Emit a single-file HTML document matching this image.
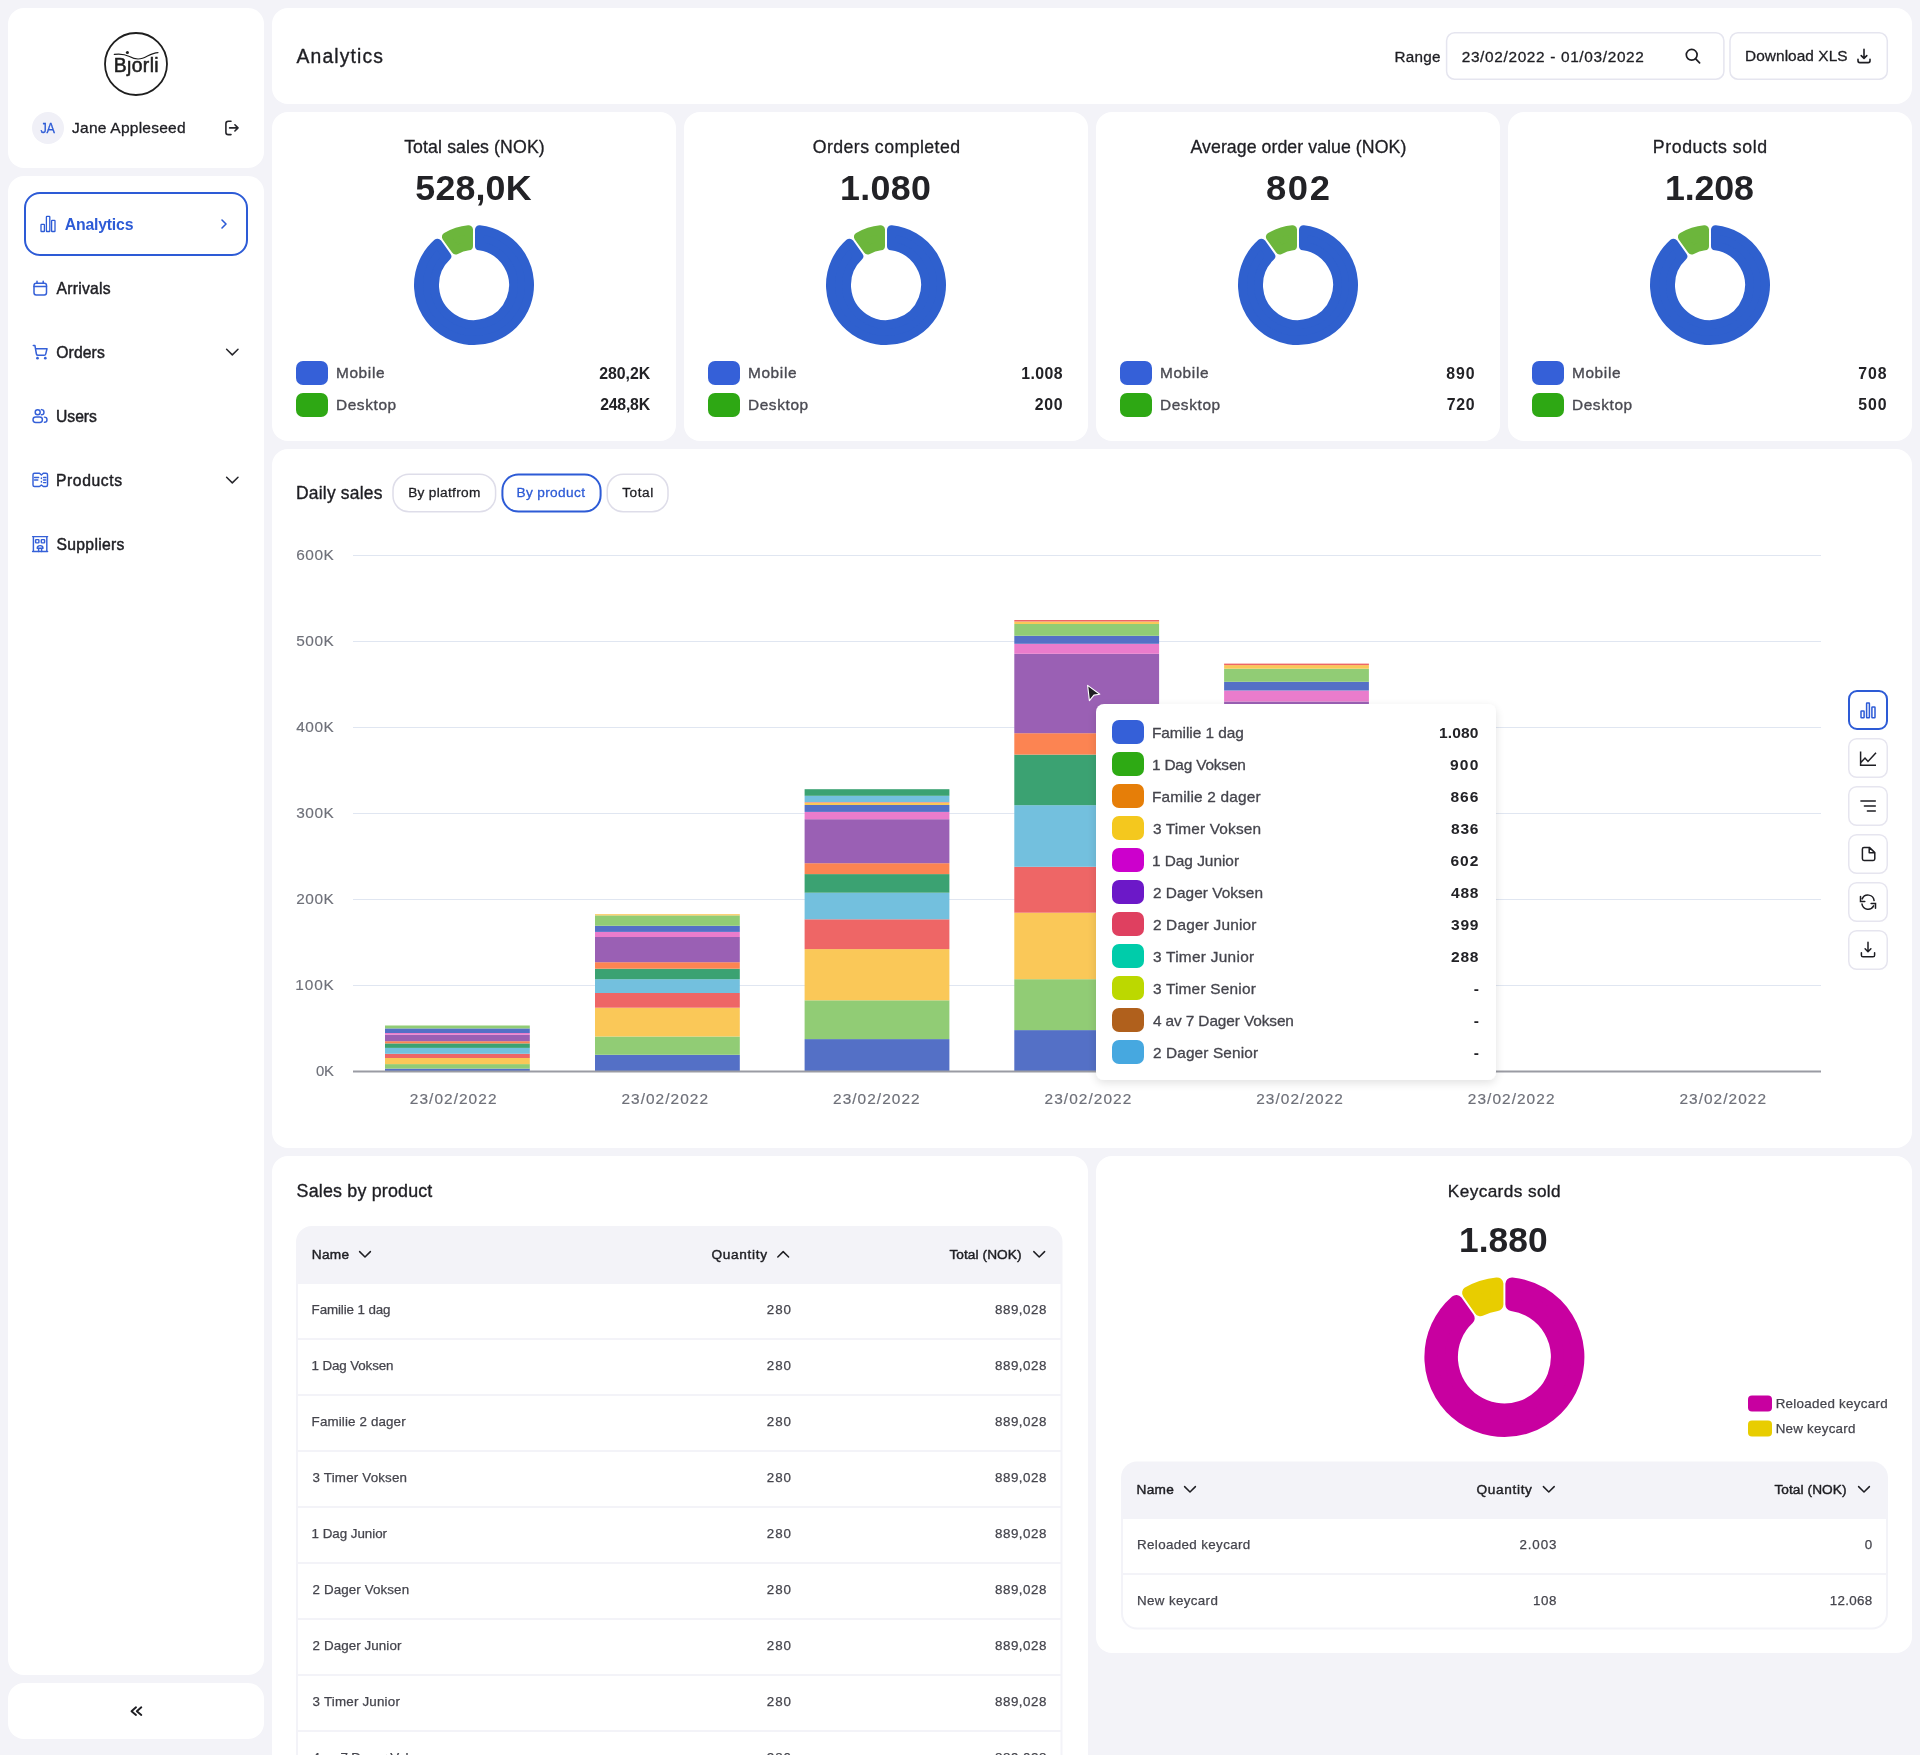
<!DOCTYPE html>
<html lang="en"><head><meta charset="utf-8"><title>Analytics</title>
<style>
*{box-sizing:border-box;margin:0;padding:0}
html,body{width:1920px;height:1755px;overflow:hidden;background:#f3f3f8;font-family:"Liberation Sans",sans-serif}
svg{position:absolute;left:0;top:0;display:block;will-change:transform}
svg text{font-family:"Liberation Sans",sans-serif;white-space:pre}
</style></head><body>
<svg width="1920" height="1755" viewBox="0 0 1920 1755">
<defs>
<filter id="tipsh" x="-10%" y="-10%" width="120%" height="125%"><feGaussianBlur in="SourceAlpha" stdDeviation="5"/><feOffset dx="0" dy="3"/><feComponentTransfer><feFuncA type="linear" slope="0.12"/></feComponentTransfer><feMerge><feMergeNode/><feMergeNode in="SourceGraphic"/></feMerge></filter>
</defs>
<rect x="8" y="8" width="256" height="160" rx="16" fill="#ffffff"/>
<rect x="8" y="176" width="256" height="1499" rx="16" fill="#ffffff"/>
<rect x="8" y="1683" width="256" height="56" rx="16" fill="#ffffff"/>
<rect x="272" y="8" width="1640" height="96" rx="16" fill="#ffffff"/>
<rect x="272" y="112" width="404" height="329" rx="16" fill="#ffffff"/>
<rect x="684" y="112" width="404" height="329" rx="16" fill="#ffffff"/>
<rect x="1096" y="112" width="404" height="329" rx="16" fill="#ffffff"/>
<rect x="1508" y="112" width="404" height="329" rx="16" fill="#ffffff"/>
<rect x="272" y="449" width="1640" height="699" rx="16" fill="#ffffff"/>
<rect x="272" y="1156" width="816" height="700" rx="16" fill="#ffffff"/>
<rect x="1096" y="1156" width="816" height="497" rx="16" fill="#ffffff"/>
<circle cx="136" cy="64" r="31" fill="none" stroke="#1e1e1e" stroke-width="1.8"/>
<text x="113.8" y="71.9" font-size="19.33" font-weight="400" fill="#1e1e1e" letter-spacing="0.37" stroke="#1e1e1e" stroke-width="0.55" stroke-linejoin="round">Bjorli</text>
<rect x="126.5" y="54" width="5" height="5.6" fill="#fff"/>
<path d="M114.3 54.4 C120 53.6 124.5 54 129.5 56.6 C133.5 58.8 138 59.8 142.5 58.3 C147.5 56.6 151.5 52.8 158 52.6" fill="none" stroke="#1e1e1e" stroke-width="1.15" stroke-linecap="round"/>
<circle cx="127.4" cy="52.5" r="1.55" fill="#1e1e1e"/>
<circle cx="48" cy="128" r="16" fill="#f0f0f7"/>
<text transform="translate(40.6 132.8) scale(0.8783 1)" font-size="14.39" font-weight="400" fill="#2d5bd6" letter-spacing="-0.45" stroke="#2d5bd6" stroke-width="0.3" stroke-linejoin="round">JA</text>
<text x="72" y="133.3" font-size="15.55" font-weight="400" fill="#1e1e23" letter-spacing="0.23" stroke="#1e1e23" stroke-width="0.3" stroke-linejoin="round">Jane Appleseed</text>
<path d="M231 121.3 H228.3 A2.4 2.4 0 0 0 225.9 123.7 V132.2 A2.4 2.4 0 0 0 228.3 134.6 H231" fill="none" stroke="#26262b" stroke-width="1.6" stroke-linecap="round"/>
<path d="M229.6 127.9 H237.6 M234.9 124.8 L238 127.9 L234.9 131" fill="none" stroke="#26262b" stroke-width="1.6" stroke-linecap="round" stroke-linejoin="round"/>
<rect x="25" y="193" width="222" height="62" rx="15" fill="none" stroke="#2d5bd6" stroke-width="2"/>
<g fill="none" stroke="#2d5bd6" stroke-width="1.3"><rect x="41" y="224.3" width="3.4" height="7.2" rx="0.6"/><rect x="46.4" y="216.4" width="3.4" height="15.1" rx="0.6"/><rect x="51.6" y="220.3" width="3.4" height="11.2" rx="0.6"/></g>
<text x="64.7" y="229.5" font-size="15.84" font-weight="700" fill="#2d5bd6" letter-spacing="-0.2">Analytics</text>
<path d="M222 220 L226 224 L222 228" fill="none" stroke="#2d5bd6" stroke-width="1.6" stroke-linecap="round" stroke-linejoin="round"/>
<text x="56.6" y="293.5" font-size="15.7" font-weight="400" fill="#1e1e23" letter-spacing="0.24" stroke="#1e1e23" stroke-width="0.45" stroke-linejoin="round">Arrivals</text>
<text x="56.3" y="357.5" font-size="15.7" font-weight="400" fill="#1e1e23" letter-spacing="0.1" stroke="#1e1e23" stroke-width="0.45" stroke-linejoin="round">Orders</text>
<text x="56" y="421.5" font-size="15.7" font-weight="400" fill="#1e1e23" letter-spacing="-0.01" stroke="#1e1e23" stroke-width="0.45" stroke-linejoin="round">Users</text>
<text x="56" y="485.5" font-size="15.7" font-weight="400" fill="#1e1e23" letter-spacing="0.59" stroke="#1e1e23" stroke-width="0.45" stroke-linejoin="round">Products</text>
<text x="56.5" y="549.5" font-size="15.7" font-weight="400" fill="#1e1e23" letter-spacing="0.31" stroke="#1e1e23" stroke-width="0.45" stroke-linejoin="round">Suppliers</text>
<g fill="none" stroke="#3560d8" stroke-width="1.5" stroke-linecap="round"><rect x="34" y="283.3" width="12.5" height="11.6" rx="2.2"/><path d="M34 286.4 H46.5 M37 281.2 V283.3 M43.2 281.2 V283.3"/></g>
<g fill="none" stroke="#3560d8" stroke-width="1.5" stroke-linecap="round" stroke-linejoin="round"><path d="M33.3 345.4 H34.9 L36.4 354 A1.6 1.6 0 0 0 38 355.3 H44.2 A1.6 1.6 0 0 0 45.7 354.1 L47 348.8 H35.6"/></g><circle cx="37.5" cy="358.2" r="1.35" fill="#3560d8"/><circle cx="45.3" cy="358.2" r="1.35" fill="#3560d8"/>
<g fill="none" stroke="#3560d8" stroke-width="1.45" stroke-linecap="round"><circle cx="37.7" cy="412.2" r="2.5"/><path d="M41.4 409.6 A2.6 2.6 0 0 1 41.4 414.8"/><rect x="33" y="417" width="9.4" height="5.4" rx="2.7"/><path d="M44.4 417.1 A2.6 2.6 0 0 1 44.4 422.3"/></g>
<g fill="none" stroke="#3560d8" stroke-width="1.45" stroke-linecap="round" stroke-linejoin="round"><path d="M34.5 473.3 H39.5 L41.4 475 L43.3 473.3 H46 A1.5 1.5 0 0 1 47.5 474.8 V485 A1.5 1.5 0 0 1 46 486.5 H43.3 L41.4 485 L39.5 486.5 H34.5 A1.5 1.5 0 0 1 33 485 V474.8 A1.5 1.5 0 0 1 34.5 473.3 Z"/><path d="M34.6 477.4 H38.6 M34.6 480 H37.8 M43.5 477.4 H45.8 M43.5 480 H45.8 M43.5 482.6 H45.8 M41.4 478 V478.6 M41.4 481.5 V482.1"/></g>
<g fill="none" stroke="#3560d8" stroke-width="1.45" stroke-linecap="round" stroke-linejoin="round"><path d="M32.6 536.6 H47.6 M32.6 551.4 H47.6 M33.4 536.6 V551.4 M46.8 536.6 V551.4"/><rect x="35.6" y="539.6" width="3.3" height="3.3" rx="0.6"/><rect x="41.3" y="539.6" width="3.3" height="3.3" rx="0.6"/><path d="M38.6 551.4 V548.4 M41.6 551.4 V548.4 M37.2 548.2 A2.9 2.6 0 0 1 43 548.2 Z"/></g>
<path d="M226.6 349.2 L232.3 354.9 L238 349.2" transform="translate(0 0)" fill="none" stroke="#26262b" stroke-width="1.5" stroke-linecap="round" stroke-linejoin="round"/>
<path d="M226.6 349.2 L232.3 354.9 L238 349.2" transform="translate(0 128)" fill="none" stroke="#26262b" stroke-width="1.5" stroke-linecap="round" stroke-linejoin="round"/>
<path d="M136 1707.3 L131.5 1711.2 L136 1715 M141.3 1707.3 L136.8 1711.2 L141.3 1715" fill="none" stroke="#1e1e23" stroke-width="1.9" stroke-linecap="round" stroke-linejoin="round"/>
<text x="296.5" y="62.65" font-size="19.33" font-weight="400" fill="#1e1e23" letter-spacing="1.13" stroke="#1e1e23" stroke-width="0.35" stroke-linejoin="round">Analytics</text>
<text x="1394.6" y="61.5" font-size="15.26" font-weight="400" fill="#1e1e23" letter-spacing="0.21" stroke="#1e1e23" stroke-width="0.3" stroke-linejoin="round">Range</text>
<rect x="1446.6" y="32.8" width="277.3" height="46.4" rx="8" fill="#fff" stroke="#e5e5ef" stroke-width="1.5"/>
<text x="1461.7" y="61.5" font-size="15.41" font-weight="400" fill="#1e1e23" letter-spacing="0.65" stroke="#1e1e23" stroke-width="0.3" stroke-linejoin="round">23/02/2022 - 01/03/2022</text>
<g fill="none" stroke="#1e1e23" stroke-width="1.7" stroke-linecap="round"><circle cx="1691.7" cy="54.8" r="5.4"/><path d="M1695.7 58.9 L1699.6 62.8"/></g>
<rect x="1730" y="32.8" width="157.3" height="46.4" rx="8" fill="#fff" stroke="#e5e5ef" stroke-width="1.5"/>
<text x="1745" y="61.3" font-size="15.41" font-weight="400" fill="#1e1e23" letter-spacing="0.06" stroke="#1e1e23" stroke-width="0.3" stroke-linejoin="round">Download XLS</text>
<g fill="none" stroke="#1e1e23" stroke-width="1.6" stroke-linecap="round" stroke-linejoin="round"><path d="M1864 49.3 V58.2 M1861.2 55.6 L1864 58.4 L1866.8 55.6 M1858 59.2 V60.8 A1.8 1.8 0 0 0 1859.8 62.6 H1868.2 A1.8 1.8 0 0 0 1870 60.8 V59.2"/></g>
<text x="404.15" y="152.7" font-size="17.73" font-weight="400" fill="#1e1e23" letter-spacing="0.11" stroke="#1e1e23" stroke-width="0.3" stroke-linejoin="round">Total sales (NOK)</text>
<text x="415.35" y="200" font-size="35.76" font-weight="700" fill="#222226" letter-spacing="0.17">528,0K</text>
<path d="M479.49 229.77 A55.5 55.5 0 1 1 437.46 243.23 L446.82 256.34 A39.5 39.5 0 1 0 479.48 245.88 Z" fill="#2f60ce" stroke="#2f60ce" stroke-width="9" stroke-linejoin="round"/>
<path d="M446.4 236.85 A55.5 55.5 0 0 1 468.51 229.77 L468.52 245.88 A39.5 39.5 0 0 0 455.75 249.97 Z" fill="#6cb63c" stroke="#6cb63c" stroke-width="9" stroke-linejoin="round"/>
<rect x="296" y="361" width="32" height="24" rx="7" fill="#3560d8"/>
<rect x="296" y="393" width="32" height="24" rx="7" fill="#2ea814"/>
<text x="335.9" y="378.4" font-size="15.41" font-weight="400" fill="#4a4a52" letter-spacing="0.66" stroke="#4a4a52" stroke-width="0.35" stroke-linejoin="round">Mobile</text>
<text x="335.9" y="410.3" font-size="15.41" font-weight="400" fill="#4a4a52" letter-spacing="0.63" stroke="#4a4a52" stroke-width="0.35" stroke-linejoin="round">Desktop</text>
<text x="599.3" y="378.5" font-size="15.84" font-weight="700" fill="#222226" letter-spacing="-0.04">280,2K</text>
<text x="600.2" y="410.4" font-size="15.84" font-weight="700" fill="#222226" letter-spacing="-0.22">248,8K</text>
<text x="812.7" y="152.7" font-size="17.73" font-weight="400" fill="#1e1e23" letter-spacing="0.44" stroke="#1e1e23" stroke-width="0.3" stroke-linejoin="round">Orders completed</text>
<text x="839.9" y="200" font-size="35.76" font-weight="700" fill="#222226" letter-spacing="0.41">1.080</text>
<path d="M891.49 229.77 A55.5 55.5 0 1 1 849.46 243.23 L858.82 256.34 A39.5 39.5 0 1 0 891.48 245.88 Z" fill="#2f60ce" stroke="#2f60ce" stroke-width="9" stroke-linejoin="round"/>
<path d="M858.4 236.85 A55.5 55.5 0 0 1 880.51 229.77 L880.52 245.88 A39.5 39.5 0 0 0 867.75 249.97 Z" fill="#6cb63c" stroke="#6cb63c" stroke-width="9" stroke-linejoin="round"/>
<rect x="708" y="361" width="32" height="24" rx="7" fill="#3560d8"/>
<rect x="708" y="393" width="32" height="24" rx="7" fill="#2ea814"/>
<text x="747.9" y="378.4" font-size="15.41" font-weight="400" fill="#4a4a52" letter-spacing="0.66" stroke="#4a4a52" stroke-width="0.35" stroke-linejoin="round">Mobile</text>
<text x="747.9" y="410.3" font-size="15.41" font-weight="400" fill="#4a4a52" letter-spacing="0.63" stroke="#4a4a52" stroke-width="0.35" stroke-linejoin="round">Desktop</text>
<text x="1021.2" y="378.5" font-size="15.84" font-weight="700" fill="#222226" letter-spacing="0.42">1.008</text>
<text x="1034.7" y="410.4" font-size="15.84" font-weight="700" fill="#222226" letter-spacing="0.7">200</text>
<text x="1190.5" y="152.7" font-size="17.73" font-weight="400" fill="#1e1e23" letter-spacing="0.06" stroke="#1e1e23" stroke-width="0.3" stroke-linejoin="round">Average order value (NOK)</text>
<text transform="translate(1265.98 200) scale(1.0170 1)" font-size="35.76" font-weight="700" fill="#222226" letter-spacing="1.6">802</text>
<path d="M1303.49 229.77 A55.5 55.5 0 1 1 1261.46 243.23 L1270.82 256.34 A39.5 39.5 0 1 0 1303.48 245.88 Z" fill="#2f60ce" stroke="#2f60ce" stroke-width="9" stroke-linejoin="round"/>
<path d="M1270.4 236.85 A55.5 55.5 0 0 1 1292.51 229.77 L1292.52 245.88 A39.5 39.5 0 0 0 1279.75 249.97 Z" fill="#6cb63c" stroke="#6cb63c" stroke-width="9" stroke-linejoin="round"/>
<rect x="1120" y="361" width="32" height="24" rx="7" fill="#3560d8"/>
<rect x="1120" y="393" width="32" height="24" rx="7" fill="#2ea814"/>
<text x="1159.9" y="378.4" font-size="15.41" font-weight="400" fill="#4a4a52" letter-spacing="0.66" stroke="#4a4a52" stroke-width="0.35" stroke-linejoin="round">Mobile</text>
<text x="1159.9" y="410.3" font-size="15.41" font-weight="400" fill="#4a4a52" letter-spacing="0.63" stroke="#4a4a52" stroke-width="0.35" stroke-linejoin="round">Desktop</text>
<text x="1446.2" y="378.5" font-size="15.84" font-weight="700" fill="#222226" letter-spacing="0.95">890</text>
<text x="1446.7" y="410.4" font-size="15.84" font-weight="700" fill="#222226" letter-spacing="0.7">720</text>
<text x="1652.85" y="152.7" font-size="17.73" font-weight="400" fill="#1e1e23" letter-spacing="0.57" stroke="#1e1e23" stroke-width="0.3" stroke-linejoin="round">Products sold</text>
<text x="1665" y="200" font-size="35.76" font-weight="700" fill="#222226" letter-spacing="-0.14">1.208</text>
<path d="M1715.49 229.77 A55.5 55.5 0 1 1 1673.46 243.23 L1682.82 256.34 A39.5 39.5 0 1 0 1715.48 245.88 Z" fill="#2f60ce" stroke="#2f60ce" stroke-width="9" stroke-linejoin="round"/>
<path d="M1682.4 236.85 A55.5 55.5 0 0 1 1704.51 229.77 L1704.52 245.88 A39.5 39.5 0 0 0 1691.75 249.97 Z" fill="#6cb63c" stroke="#6cb63c" stroke-width="9" stroke-linejoin="round"/>
<rect x="1532" y="361" width="32" height="24" rx="7" fill="#3560d8"/>
<rect x="1532" y="393" width="32" height="24" rx="7" fill="#2ea814"/>
<text x="1571.9" y="378.4" font-size="15.41" font-weight="400" fill="#4a4a52" letter-spacing="0.66" stroke="#4a4a52" stroke-width="0.35" stroke-linejoin="round">Mobile</text>
<text x="1571.9" y="410.3" font-size="15.41" font-weight="400" fill="#4a4a52" letter-spacing="0.63" stroke="#4a4a52" stroke-width="0.35" stroke-linejoin="round">Desktop</text>
<text x="1858.2" y="378.5" font-size="15.84" font-weight="700" fill="#222226" letter-spacing="0.95">708</text>
<text x="1858.2" y="410.4" font-size="15.84" font-weight="700" fill="#222226" letter-spacing="0.95">500</text>
<text x="296" y="498.75" font-size="17.44" font-weight="400" fill="#1e1e23" letter-spacing="0.21" stroke="#1e1e23" stroke-width="0.35" stroke-linejoin="round">Daily sales</text>
<rect x="393" y="474.2" width="102.6" height="37.6" rx="16" fill="#fff" stroke="#dedde9" stroke-width="1.5"/>
<rect x="502.4" y="474.4" width="98.2" height="37.2" rx="16" fill="#fff" stroke="#2d5bd6" stroke-width="2"/>
<rect x="607.2" y="474.2" width="60.8" height="37.6" rx="16" fill="#fff" stroke="#dedde9" stroke-width="1.5"/>
<text x="408.15" y="497.45" font-size="13.66" font-weight="400" fill="#1e1e23" letter-spacing="0.31" stroke="#1e1e23" stroke-width="0.3" stroke-linejoin="round">By platfrom</text>
<text x="516.5" y="497.45" font-size="13.66" font-weight="400" fill="#2d5bd6" letter-spacing="0.35" stroke="#2d5bd6" stroke-width="0.3" stroke-linejoin="round">By product</text>
<text x="622.2" y="497.45" font-size="13.66" font-weight="400" fill="#1e1e23" letter-spacing="0.55" stroke="#1e1e23" stroke-width="0.3" stroke-linejoin="round">Total</text>
<rect x="353" y="555" width="1468" height="1" fill="#e0e6f1"/>
<rect x="353" y="641" width="1468" height="1" fill="#e0e6f1"/>
<rect x="353" y="727" width="1468" height="1" fill="#e0e6f1"/>
<rect x="353" y="813" width="1468" height="1" fill="#e0e6f1"/>
<rect x="353" y="899" width="1468" height="1" fill="#e0e6f1"/>
<rect x="353" y="985" width="1468" height="1" fill="#e0e6f1"/>
<text x="296.2" y="560.1" font-size="15.41" font-weight="400" fill="#6e7079" letter-spacing="0.57" stroke="#6e7079" stroke-width="0.15" stroke-linejoin="round">600K</text>
<text x="296.2" y="646.1" font-size="15.41" font-weight="400" fill="#6e7079" letter-spacing="0.57" stroke="#6e7079" stroke-width="0.15" stroke-linejoin="round">500K</text>
<text x="296.2" y="732.1" font-size="15.41" font-weight="400" fill="#6e7079" letter-spacing="0.57" stroke="#6e7079" stroke-width="0.15" stroke-linejoin="round">400K</text>
<text x="296.2" y="818.1" font-size="15.41" font-weight="400" fill="#6e7079" letter-spacing="0.57" stroke="#6e7079" stroke-width="0.15" stroke-linejoin="round">300K</text>
<text x="296.2" y="904.1" font-size="15.41" font-weight="400" fill="#6e7079" letter-spacing="0.57" stroke="#6e7079" stroke-width="0.15" stroke-linejoin="round">200K</text>
<text x="295.2" y="990.1" font-size="15.41" font-weight="400" fill="#6e7079" letter-spacing="0.91" stroke="#6e7079" stroke-width="0.15" stroke-linejoin="round">100K</text>
<text transform="translate(316.1 1076.1) scale(0.9681 1)" font-size="15.41" font-weight="400" fill="#6e7079" letter-spacing="-0.45" stroke="#6e7079" stroke-width="0.15" stroke-linejoin="round">0K</text>
<rect x="385" y="1068.6" width="144.8" height="2.9" fill="#5470c6"/>
<rect x="385" y="1064.1" width="144.8" height="4.5" fill="#91cc75"/>
<rect x="385" y="1058" width="144.8" height="6.1" fill="#fac858"/>
<rect x="385" y="1053.8" width="144.8" height="4.2" fill="#ee6666"/>
<rect x="385" y="1047.9" width="144.8" height="5.9" fill="#73c0de"/>
<rect x="385" y="1043.4" width="144.8" height="4.5" fill="#3ba272"/>
<rect x="385" y="1041.2" width="144.8" height="2.2" fill="#fc8452"/>
<rect x="385" y="1034.7" width="144.8" height="6.5" fill="#9a60b4"/>
<rect x="385" y="1033" width="144.8" height="1.7" fill="#ea7ccc"/>
<rect x="385" y="1028.4" width="144.8" height="4.6" fill="#5470c6"/>
<rect x="385" y="1025.5" width="144.8" height="2.9" fill="#91cc75"/>
<rect x="595" y="1054.8" width="144.8" height="16.7" fill="#5470c6"/>
<rect x="595" y="1036.5" width="144.8" height="18.3" fill="#91cc75"/>
<rect x="595" y="1007.7" width="144.8" height="28.8" fill="#fac858"/>
<rect x="595" y="993" width="144.8" height="14.7" fill="#ee6666"/>
<rect x="595" y="979.2" width="144.8" height="13.8" fill="#73c0de"/>
<rect x="595" y="968.7" width="144.8" height="10.5" fill="#3ba272"/>
<rect x="595" y="962.2" width="144.8" height="6.5" fill="#fc8452"/>
<rect x="595" y="937" width="144.8" height="25.2" fill="#9a60b4"/>
<rect x="595" y="931.9" width="144.8" height="5.1" fill="#ea7ccc"/>
<rect x="595" y="925.8" width="144.8" height="6.1" fill="#5470c6"/>
<rect x="595" y="915.4" width="144.8" height="10.4" fill="#91cc75"/>
<rect x="595" y="914.2" width="144.8" height="1.2" fill="#fac858"/>
<rect x="804.6" y="1039.1" width="144.8" height="32.4" fill="#5470c6"/>
<rect x="804.6" y="1000.3" width="144.8" height="38.8" fill="#91cc75"/>
<rect x="804.6" y="949.1" width="144.8" height="51.2" fill="#fac858"/>
<rect x="804.6" y="919.3" width="144.8" height="29.8" fill="#ee6666"/>
<rect x="804.6" y="892.7" width="144.8" height="26.6" fill="#73c0de"/>
<rect x="804.6" y="874.1" width="144.8" height="18.6" fill="#3ba272"/>
<rect x="804.6" y="863.2" width="144.8" height="10.9" fill="#fc8452"/>
<rect x="804.6" y="819.2" width="144.8" height="44" fill="#9a60b4"/>
<rect x="804.6" y="811.9" width="144.8" height="7.3" fill="#ea7ccc"/>
<rect x="804.6" y="805" width="144.8" height="6.9" fill="#5470c6"/>
<rect x="804.6" y="802.6" width="144.8" height="2.4" fill="#fac858"/>
<rect x="804.6" y="802.1" width="144.8" height="0.5" fill="#ee6666"/>
<rect x="804.6" y="795.8" width="144.8" height="6.3" fill="#73c0de"/>
<rect x="804.6" y="789.2" width="144.8" height="6.6" fill="#3ba272"/>
<rect x="1014.3" y="1030.1" width="144.8" height="41.4" fill="#5470c6"/>
<rect x="1014.3" y="979.2" width="144.8" height="50.9" fill="#91cc75"/>
<rect x="1014.3" y="912.7" width="144.8" height="66.5" fill="#fac858"/>
<rect x="1014.3" y="866.8" width="144.8" height="45.9" fill="#ee6666"/>
<rect x="1014.3" y="805.2" width="144.8" height="61.6" fill="#73c0de"/>
<rect x="1014.3" y="754.6" width="144.8" height="50.6" fill="#3ba272"/>
<rect x="1014.3" y="733.2" width="144.8" height="21.4" fill="#fc8452"/>
<rect x="1014.3" y="653.8" width="144.8" height="79.4" fill="#9a60b4"/>
<rect x="1014.3" y="643.8" width="144.8" height="10" fill="#ea7ccc"/>
<rect x="1014.3" y="635.8" width="144.8" height="8" fill="#5470c6"/>
<rect x="1014.3" y="624" width="144.8" height="11.8" fill="#91cc75"/>
<rect x="1014.3" y="621.5" width="144.8" height="2.5" fill="#fac858"/>
<rect x="1014.3" y="620" width="144.8" height="1.5" fill="#ee6666"/>
<rect x="1224.1" y="1030.1" width="144.8" height="41.4" fill="#5470c6"/>
<rect x="1224.1" y="979.2" width="144.8" height="50.9" fill="#91cc75"/>
<rect x="1224.1" y="912.7" width="144.8" height="66.5" fill="#fac858"/>
<rect x="1224.1" y="866.8" width="144.8" height="45.9" fill="#ee6666"/>
<rect x="1224.1" y="805.2" width="144.8" height="61.6" fill="#73c0de"/>
<rect x="1224.1" y="754.6" width="144.8" height="50.6" fill="#3ba272"/>
<rect x="1224.1" y="733.2" width="144.8" height="21.4" fill="#fc8452"/>
<rect x="1224.1" y="701.5" width="144.8" height="31.7" fill="#9a60b4"/>
<rect x="1224.1" y="690.5" width="144.8" height="11" fill="#ea7ccc"/>
<rect x="1224.1" y="681.8" width="144.8" height="8.7" fill="#5470c6"/>
<rect x="1224.1" y="668.7" width="144.8" height="13.1" fill="#91cc75"/>
<rect x="1224.1" y="665.1" width="144.8" height="3.6" fill="#fac858"/>
<rect x="1224.1" y="663.6" width="144.8" height="1.5" fill="#ee6666"/>
<rect x="353" y="1070.5" width="1468" height="2" fill="#9a9ba3"/>
<text x="409.8" y="1103.6" font-size="15.41" font-weight="400" fill="#6e7079" letter-spacing="1.06" stroke="#6e7079" stroke-width="0.2" stroke-linejoin="round">23/02/2022</text>
<text x="621.4" y="1103.6" font-size="15.41" font-weight="400" fill="#6e7079" letter-spacing="1.06" stroke="#6e7079" stroke-width="0.2" stroke-linejoin="round">23/02/2022</text>
<text x="833" y="1103.6" font-size="15.41" font-weight="400" fill="#6e7079" letter-spacing="1.06" stroke="#6e7079" stroke-width="0.2" stroke-linejoin="round">23/02/2022</text>
<text x="1044.6" y="1103.6" font-size="15.41" font-weight="400" fill="#6e7079" letter-spacing="1.06" stroke="#6e7079" stroke-width="0.2" stroke-linejoin="round">23/02/2022</text>
<text x="1256.2" y="1103.6" font-size="15.41" font-weight="400" fill="#6e7079" letter-spacing="1.06" stroke="#6e7079" stroke-width="0.2" stroke-linejoin="round">23/02/2022</text>
<text x="1467.8" y="1103.6" font-size="15.41" font-weight="400" fill="#6e7079" letter-spacing="1.06" stroke="#6e7079" stroke-width="0.2" stroke-linejoin="round">23/02/2022</text>
<text x="1679.4" y="1103.6" font-size="15.41" font-weight="400" fill="#6e7079" letter-spacing="1.06" stroke="#6e7079" stroke-width="0.2" stroke-linejoin="round">23/02/2022</text>
<path d="M1087.6 685.4 L1099.8 694.2 L1093.9 695.1 L1089.4 700.6 Z" fill="#1e1e23" stroke="#fff" stroke-width="1.1" stroke-linejoin="round"/>
<rect x="1096" y="704" width="400" height="376" rx="8" fill="#fff" filter="url(#tipsh)"/>
<rect x="1112" y="720" width="32" height="24" rx="7" fill="#3560d8"/>
<text x="1151.9" y="737.6" font-size="15.41" font-weight="400" fill="#45454d" letter-spacing="-0.04" stroke="#45454d" stroke-width="0.3" stroke-linejoin="round">Familie 1 dag</text>
<text x="1438.9" y="737.6" font-size="15.55" font-weight="700" fill="#222226" letter-spacing="0.14">1.080</text>
<rect x="1112" y="752" width="32" height="24" rx="7" fill="#2eaa14"/>
<text x="1151.9" y="769.6" font-size="15.41" font-weight="400" fill="#45454d" letter-spacing="-0.18" stroke="#45454d" stroke-width="0.3" stroke-linejoin="round">1 Dag Voksen</text>
<text x="1450" y="769.6" font-size="15.55" font-weight="700" fill="#222226" letter-spacing="1.2">900</text>
<rect x="1112" y="784" width="32" height="24" rx="7" fill="#e67e08"/>
<text x="1151.9" y="801.6" font-size="15.41" font-weight="400" fill="#45454d" letter-spacing="0.18" stroke="#45454d" stroke-width="0.3" stroke-linejoin="round">Familie 2 dager</text>
<text x="1450.4" y="801.6" font-size="15.55" font-weight="700" fill="#222226" letter-spacing="1">866</text>
<rect x="1112" y="816" width="32" height="24" rx="7" fill="#f4c81e"/>
<text x="1152.9" y="833.6" font-size="15.41" font-weight="400" fill="#45454d" letter-spacing="0.15" stroke="#45454d" stroke-width="0.3" stroke-linejoin="round">3 Timer Voksen</text>
<text x="1451.1" y="833.6" font-size="15.55" font-weight="700" fill="#222226" letter-spacing="0.65">836</text>
<rect x="1112" y="848" width="32" height="24" rx="7" fill="#cc00cc"/>
<text x="1151.9" y="865.6" font-size="15.41" font-weight="400" fill="#45454d" letter-spacing="-0.02" stroke="#45454d" stroke-width="0.3" stroke-linejoin="round">1 Dag Junior</text>
<text x="1450.4" y="865.6" font-size="15.55" font-weight="700" fill="#222226" letter-spacing="1">602</text>
<rect x="1112" y="880" width="32" height="24" rx="7" fill="#6c18c8"/>
<text x="1152.9" y="897.6" font-size="15.41" font-weight="400" fill="#45454d" letter-spacing="0.04" stroke="#45454d" stroke-width="0.3" stroke-linejoin="round">2 Dager Voksen</text>
<text x="1451.1" y="897.6" font-size="15.55" font-weight="700" fill="#222226" letter-spacing="0.65">488</text>
<rect x="1112" y="912" width="32" height="24" rx="7" fill="#df4060"/>
<text x="1152.9" y="929.6" font-size="15.41" font-weight="400" fill="#45454d" letter-spacing="0.19" stroke="#45454d" stroke-width="0.3" stroke-linejoin="round">2 Dager Junior</text>
<text x="1451.1" y="929.6" font-size="15.55" font-weight="700" fill="#222226" letter-spacing="0.65">399</text>
<rect x="1112" y="944" width="32" height="24" rx="7" fill="#00ccaa"/>
<text x="1152.9" y="961.6" font-size="15.41" font-weight="400" fill="#45454d" letter-spacing="0.28" stroke="#45454d" stroke-width="0.3" stroke-linejoin="round">3 Timer Junior</text>
<text x="1451.1" y="961.6" font-size="15.55" font-weight="700" fill="#222226" letter-spacing="0.65">288</text>
<rect x="1112" y="976" width="32" height="24" rx="7" fill="#bcd800"/>
<text x="1152.9" y="993.6" font-size="15.41" font-weight="400" fill="#45454d" letter-spacing="0.21" stroke="#45454d" stroke-width="0.3" stroke-linejoin="round">3 Timer Senior</text>
<text x="1473.7" y="993.6" font-size="15.55" font-weight="700" fill="#222226">-</text>
<rect x="1112" y="1008" width="32" height="24" rx="7" fill="#b0601c"/>
<text x="1152.9" y="1025.6" font-size="15.41" font-weight="400" fill="#45454d" letter-spacing="-0.11" stroke="#45454d" stroke-width="0.3" stroke-linejoin="round">4 av 7 Dager Voksen</text>
<text x="1473.7" y="1025.6" font-size="15.55" font-weight="700" fill="#222226">-</text>
<rect x="1112" y="1040" width="32" height="24" rx="7" fill="#46a8e0"/>
<text x="1152.9" y="1057.6" font-size="15.41" font-weight="400" fill="#45454d" letter-spacing="0.12" stroke="#45454d" stroke-width="0.3" stroke-linejoin="round">2 Dager Senior</text>
<text x="1473.7" y="1057.6" font-size="15.55" font-weight="700" fill="#222226">-</text>
<rect x="1849" y="691" width="38" height="38" rx="8" fill="#fff" stroke="#2d5bd6" stroke-width="2"/>
<rect x="1848.75" y="738.75" width="38.5" height="38.5" rx="8" fill="#fff" stroke="#e6e5ef" stroke-width="1.5"/>
<rect x="1848.75" y="786.75" width="38.5" height="38.5" rx="8" fill="#fff" stroke="#e6e5ef" stroke-width="1.5"/>
<rect x="1848.75" y="834.75" width="38.5" height="38.5" rx="8" fill="#fff" stroke="#e6e5ef" stroke-width="1.5"/>
<rect x="1848.75" y="882.75" width="38.5" height="38.5" rx="8" fill="#fff" stroke="#e6e5ef" stroke-width="1.5"/>
<rect x="1848.75" y="930.75" width="38.5" height="38.5" rx="8" fill="#fff" stroke="#e6e5ef" stroke-width="1.5"/>
<g fill="none" stroke="#2d5bd6" stroke-width="1.5"><rect x="1861" y="711" width="3.1" height="6.8" rx="0.6"/><rect x="1866.6" y="703" width="2.8" height="14.8" rx="0.4"/><rect x="1871.9" y="707" width="3.1" height="10.8" rx="0.6"/></g>
<path d="M1860.6 751.6 V765.2 H1876 M1860.6 762.8 L1865 758 L1868 761.4 L1876 752.8" fill="none" stroke="#1e1e23" stroke-width="1.5" stroke-linejoin="miter"/>
<path d="M1860.9 801.1 H1875.3 M1864.4 806 H1875.3 M1867.4 811 H1875.3" fill="none" stroke="#1e1e23" stroke-width="1.5" stroke-linecap="round"/>
<path d="M1864 847.4 H1869.4 L1874.8 852.6 V858.8 A1.6 1.6 0 0 1 1873.2 860.4 H1864 A1.6 1.6 0 0 1 1862.4 858.8 V849 A1.6 1.6 0 0 1 1864 847.4 Z M1869.2 847.6 V852.8 H1874.6" fill="none" stroke="#1e1e23" stroke-width="1.5" stroke-linejoin="round"/>
<path d="M1874.1 900.6 A6.2 6.2 0 0 0 1862.2 898.9 M1862 904.1 A6.2 6.2 0 0 0 1873.6 905.9 M1860.5 896.5 V901.4 H1864.8 M1871.1 903.4 H1875.5 V908.3" fill="none" stroke="#1e1e23" stroke-width="1.5" stroke-linecap="round" stroke-linejoin="miter"/>
<path d="M1868 942.2 V951.6 M1865.1 948.8 L1868 951.7 L1870.9 948.8 M1861.4 952.8 V955.2 A1.6 1.6 0 0 0 1863 956.8 H1873 A1.6 1.6 0 0 0 1874.6 955.2 V952.8" fill="none" stroke="#1e1e23" stroke-width="1.5" stroke-linecap="round" stroke-linejoin="round"/>
<text x="296.6" y="1196.8" font-size="17.88" font-weight="400" fill="#1e1e23" letter-spacing="0.18" stroke="#1e1e23" stroke-width="0.35" stroke-linejoin="round">Sales by product</text>
<path d="M296 1756 V1242 A16 16 0 0 1 312 1226 H1046.5 A16 16 0 0 1 1062.5 1242 V1756 Z" fill="#f3f3f8"/>
<rect x="298" y="1284" width="762.5" height="54" rx="0" fill="#fff"/>
<text x="311.6" y="1313.9" font-size="13.37" font-weight="400" fill="#45454d" letter-spacing="-0.11" stroke="#45454d" stroke-width="0.25" stroke-linejoin="round">Familie 1 dag</text>
<text x="766.8" y="1313.9" font-size="13.37" font-weight="400" fill="#45454d" letter-spacing="0.92" stroke="#45454d" stroke-width="0.25" stroke-linejoin="round">280</text>
<text x="995" y="1313.9" font-size="13.37" font-weight="400" fill="#45454d" letter-spacing="0.52" stroke="#45454d" stroke-width="0.25" stroke-linejoin="round">889,028</text>
<rect x="298" y="1340" width="762.5" height="54" rx="0" fill="#fff"/>
<text x="311.6" y="1369.9" font-size="13.37" font-weight="400" fill="#45454d" letter-spacing="-0.12" stroke="#45454d" stroke-width="0.25" stroke-linejoin="round">1 Dag Voksen</text>
<text x="766.8" y="1369.9" font-size="13.37" font-weight="400" fill="#45454d" letter-spacing="0.92" stroke="#45454d" stroke-width="0.25" stroke-linejoin="round">280</text>
<text x="995" y="1369.9" font-size="13.37" font-weight="400" fill="#45454d" letter-spacing="0.52" stroke="#45454d" stroke-width="0.25" stroke-linejoin="round">889,028</text>
<rect x="298" y="1396" width="762.5" height="54" rx="0" fill="#fff"/>
<text x="311.6" y="1425.9" font-size="13.37" font-weight="400" fill="#45454d" letter-spacing="0.14" stroke="#45454d" stroke-width="0.25" stroke-linejoin="round">Familie 2 dager</text>
<text x="766.8" y="1425.9" font-size="13.37" font-weight="400" fill="#45454d" letter-spacing="0.92" stroke="#45454d" stroke-width="0.25" stroke-linejoin="round">280</text>
<text x="995" y="1425.9" font-size="13.37" font-weight="400" fill="#45454d" letter-spacing="0.52" stroke="#45454d" stroke-width="0.25" stroke-linejoin="round">889,028</text>
<rect x="298" y="1452" width="762.5" height="54" rx="0" fill="#fff"/>
<text x="312.6" y="1481.9" font-size="13.37" font-weight="400" fill="#45454d" letter-spacing="0.18" stroke="#45454d" stroke-width="0.25" stroke-linejoin="round">3 Timer Voksen</text>
<text x="766.8" y="1481.9" font-size="13.37" font-weight="400" fill="#45454d" letter-spacing="0.92" stroke="#45454d" stroke-width="0.25" stroke-linejoin="round">280</text>
<text x="995" y="1481.9" font-size="13.37" font-weight="400" fill="#45454d" letter-spacing="0.52" stroke="#45454d" stroke-width="0.25" stroke-linejoin="round">889,028</text>
<rect x="298" y="1508" width="762.5" height="54" rx="0" fill="#fff"/>
<text x="311.6" y="1537.9" font-size="13.37" font-weight="400" fill="#45454d" letter-spacing="-0.03" stroke="#45454d" stroke-width="0.25" stroke-linejoin="round">1 Dag Junior</text>
<text x="766.8" y="1537.9" font-size="13.37" font-weight="400" fill="#45454d" letter-spacing="0.92" stroke="#45454d" stroke-width="0.25" stroke-linejoin="round">280</text>
<text x="995" y="1537.9" font-size="13.37" font-weight="400" fill="#45454d" letter-spacing="0.52" stroke="#45454d" stroke-width="0.25" stroke-linejoin="round">889,028</text>
<rect x="298" y="1564" width="762.5" height="54" rx="0" fill="#fff"/>
<text x="312.6" y="1593.9" font-size="13.37" font-weight="400" fill="#45454d" letter-spacing="0.11" stroke="#45454d" stroke-width="0.25" stroke-linejoin="round">2 Dager Voksen</text>
<text x="766.8" y="1593.9" font-size="13.37" font-weight="400" fill="#45454d" letter-spacing="0.92" stroke="#45454d" stroke-width="0.25" stroke-linejoin="round">280</text>
<text x="995" y="1593.9" font-size="13.37" font-weight="400" fill="#45454d" letter-spacing="0.52" stroke="#45454d" stroke-width="0.25" stroke-linejoin="round">889,028</text>
<rect x="298" y="1620" width="762.5" height="54" rx="0" fill="#fff"/>
<text x="312.6" y="1649.9" font-size="13.37" font-weight="400" fill="#45454d" letter-spacing="0.09" stroke="#45454d" stroke-width="0.25" stroke-linejoin="round">2 Dager Junior</text>
<text x="766.8" y="1649.9" font-size="13.37" font-weight="400" fill="#45454d" letter-spacing="0.92" stroke="#45454d" stroke-width="0.25" stroke-linejoin="round">280</text>
<text x="995" y="1649.9" font-size="13.37" font-weight="400" fill="#45454d" letter-spacing="0.52" stroke="#45454d" stroke-width="0.25" stroke-linejoin="round">889,028</text>
<rect x="298" y="1676" width="762.5" height="54" rx="0" fill="#fff"/>
<text x="312.6" y="1705.9" font-size="13.37" font-weight="400" fill="#45454d" letter-spacing="0.2" stroke="#45454d" stroke-width="0.25" stroke-linejoin="round">3 Timer Junior</text>
<text x="766.8" y="1705.9" font-size="13.37" font-weight="400" fill="#45454d" letter-spacing="0.92" stroke="#45454d" stroke-width="0.25" stroke-linejoin="round">280</text>
<text x="995" y="1705.9" font-size="13.37" font-weight="400" fill="#45454d" letter-spacing="0.52" stroke="#45454d" stroke-width="0.25" stroke-linejoin="round">889,028</text>
<rect x="298" y="1732" width="762.5" height="54" rx="0" fill="#fff"/>
<text x="312.6" y="1761.9" font-size="13.37" font-weight="400" fill="#45454d" letter-spacing="-0.2" stroke="#45454d" stroke-width="0.25" stroke-linejoin="round">4 av 7 Dager Voksen</text>
<text x="766.8" y="1761.9" font-size="13.37" font-weight="400" fill="#45454d" letter-spacing="0.92" stroke="#45454d" stroke-width="0.25" stroke-linejoin="round">280</text>
<text x="995" y="1761.9" font-size="13.37" font-weight="400" fill="#45454d" letter-spacing="0.52" stroke="#45454d" stroke-width="0.25" stroke-linejoin="round">889,028</text>
<text x="311.8" y="1258.7" font-size="13.66" font-weight="400" fill="#1e1e23" letter-spacing="0.26" stroke="#1e1e23" stroke-width="0.45" stroke-linejoin="round">Name</text>
<path d="M359.6 1251.6 L365 1257 L370.4 1251.6" fill="none" stroke="#1e1e23" stroke-width="1.5" stroke-linecap="round" stroke-linejoin="round"/>
<text x="711.6" y="1258.7" font-size="13.66" font-weight="400" fill="#1e1e23" letter-spacing="0.65" stroke="#1e1e23" stroke-width="0.45" stroke-linejoin="round">Quantity</text>
<path d="M777.8 1257 L783.2 1251.6 L788.6 1257" fill="none" stroke="#1e1e23" stroke-width="1.5" stroke-linecap="round" stroke-linejoin="round"/>
<text x="949.4" y="1258.7" font-size="13.66" font-weight="400" fill="#1e1e23" letter-spacing="0.08" stroke="#1e1e23" stroke-width="0.45" stroke-linejoin="round">Total (NOK)</text>
<path d="M1033.8 1251.6 L1039.2 1257 L1044.6 1251.6" fill="none" stroke="#1e1e23" stroke-width="1.5" stroke-linecap="round" stroke-linejoin="round"/>
<text x="1447.8" y="1196.65" font-size="17.22" font-weight="400" fill="#1e1e23" letter-spacing="0.4" stroke="#1e1e23" stroke-width="0.35" stroke-linejoin="round">Keycards sold</text>
<text x="1459" y="1251.8" font-size="35.32" font-weight="700" fill="#222226" letter-spacing="0.07">1.880</text>
<path d="M1511.89 1283.88 A73.5 73.5 0 1 1 1456.33 1301.4 L1468.18 1318.31 A53 53 0 1 0 1511.87 1304.53 Z" fill="#c800a0" stroke="#c800a0" stroke-width="13" stroke-linejoin="round"/>
<path d="M1468.59 1292.81 A73.5 73.5 0 0 1 1496.91 1283.88 L1496.93 1304.53 A53 53 0 0 0 1480.43 1309.73 Z" fill="#e8cd00" stroke="#e8cd00" stroke-width="13" stroke-linejoin="round"/>
<rect x="1748" y="1395.5" width="24" height="16" rx="4" fill="#c800a0"/>
<rect x="1748" y="1420.5" width="24" height="16" rx="4" fill="#e8cd00"/>
<text x="1775.7" y="1407.9" font-size="13.37" font-weight="400" fill="#45454d" letter-spacing="0.28" stroke="#45454d" stroke-width="0.25" stroke-linejoin="round">Reloaded keycard</text>
<text x="1775.7" y="1432.9" font-size="13.37" font-weight="400" fill="#45454d" letter-spacing="0.25" stroke="#45454d" stroke-width="0.25" stroke-linejoin="round">New keycard</text>
<rect x="1121" y="1461.5" width="767" height="168" rx="16" fill="#f3f3f8"/>
<path d="M1123 1519 H1886 V1573 H1123 Z" fill="#fff"/>
<path d="M1123 1575 H1886 V1613.5 A14 14 0 0 1 1872 1627.5 H1137 A14 14 0 0 1 1123 1613.5 Z" fill="#fff"/>
<text x="1136.6" y="1493.7" font-size="13.66" font-weight="400" fill="#1e1e23" letter-spacing="0.26" stroke="#1e1e23" stroke-width="0.45" stroke-linejoin="round">Name</text>
<path d="M1184.6 1486.6 L1190 1492 L1195.4 1486.6" fill="none" stroke="#1e1e23" stroke-width="1.5" stroke-linecap="round" stroke-linejoin="round"/>
<text x="1476.5" y="1493.7" font-size="13.66" font-weight="400" fill="#1e1e23" letter-spacing="0.65" stroke="#1e1e23" stroke-width="0.45" stroke-linejoin="round">Quantity</text>
<path d="M1543.4 1486.6 L1548.8 1492 L1554.2 1486.6" fill="none" stroke="#1e1e23" stroke-width="1.5" stroke-linecap="round" stroke-linejoin="round"/>
<text x="1774.4" y="1493.7" font-size="13.66" font-weight="400" fill="#1e1e23" letter-spacing="0.08" stroke="#1e1e23" stroke-width="0.45" stroke-linejoin="round">Total (NOK)</text>
<path d="M1858.6 1486.6 L1864 1492 L1869.4 1486.6" fill="none" stroke="#1e1e23" stroke-width="1.5" stroke-linecap="round" stroke-linejoin="round"/>
<text x="1137" y="1549" font-size="13.37" font-weight="400" fill="#45454d" letter-spacing="0.37" stroke="#45454d" stroke-width="0.25" stroke-linejoin="round">Reloaded keycard</text>
<text x="1519.4" y="1549" font-size="13.37" font-weight="400" fill="#45454d" letter-spacing="0.9" stroke="#45454d" stroke-width="0.25" stroke-linejoin="round">2.003</text>
<text x="1864.7" y="1549" font-size="13.37" font-weight="400" fill="#45454d" stroke="#45454d" stroke-width="0.25" stroke-linejoin="round">0</text>
<text x="1137" y="1605" font-size="13.37" font-weight="400" fill="#45454d" letter-spacing="0.36" stroke="#45454d" stroke-width="0.25" stroke-linejoin="round">New keycard</text>
<text x="1533" y="1605" font-size="13.37" font-weight="400" fill="#45454d" letter-spacing="0.57" stroke="#45454d" stroke-width="0.25" stroke-linejoin="round">108</text>
<text x="1829.7" y="1605" font-size="13.37" font-weight="400" fill="#45454d" letter-spacing="0.31" stroke="#45454d" stroke-width="0.25" stroke-linejoin="round">12.068</text>
</svg>
</body></html>
